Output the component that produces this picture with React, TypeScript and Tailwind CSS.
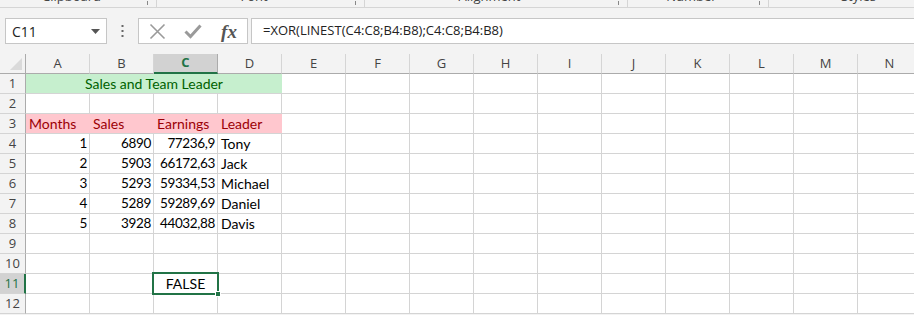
import React from 'react';

const COLS = ['A', 'B', 'C', 'D', 'E', 'F', 'G', 'H', 'I', 'J', 'K', 'L', 'M', 'N'];

type Cell = { text?: string; align?: 'left' | 'right' | 'center' };

// sheet contents, by row number -> column index
const data: Record<number, Record<number, Cell>> = {
  4: { 0: { text: '1', align: 'right' }, 1: { text: '6890', align: 'right' }, 2: { text: '77236,9', align: 'right' }, 3: { text: 'Tony' } },
  5: { 0: { text: '2', align: 'right' }, 1: { text: '5903', align: 'right' }, 2: { text: '66172,63', align: 'right' }, 3: { text: 'Jack' } },
  6: { 0: { text: '3', align: 'right' }, 1: { text: '5293', align: 'right' }, 2: { text: '59334,53', align: 'right' }, 3: { text: 'Michael' } },
  7: { 0: { text: '4', align: 'right' }, 1: { text: '5289', align: 'right' }, 2: { text: '59289,69', align: 'right' }, 3: { text: 'Daniel' } },
  8: { 0: { text: '5', align: 'right' }, 1: { text: '3928', align: 'right' }, 2: { text: '44032,88', align: 'right' }, 3: { text: 'Davis' } },
};

const headers3 = ['Months', 'Sales', 'Earnings', 'Leader'];

const ribbonGroups = [
  { label: 'Clipboard', w: 'w-[157px]', launcher: true },
  { label: 'Font', w: 'w-[208px]', launcher: true },
  { label: 'Alignment', w: 'w-[263px]', launcher: true },
  { label: 'Number', w: 'w-[141px]', launcher: true },
  { label: 'Styles', w: 'w-[180px]', launcher: false },
];

const RowHeader = ({ n, active }: { n: number; active?: boolean }) => (
  <div
    className={`w-[26px] shrink-0 h-full flex items-center justify-center text-[13px] border-b border-[#d4d4d4] ${
      active
        ? 'bg-[#d2d2d2] text-[#217346] border-r-2 border-r-[#217346]'
        : 'bg-[#f3f3f3] text-[#444] border-r border-r-[#ababab]'
    }`}
    style={{ fontFamily: '"Open Sans", sans-serif' }}
  >
    {n}
  </div>
);

const GridCell = ({ cell }: { cell?: Cell }) => (
  <div
    className={`w-[64px] shrink-0 h-full border-r border-b border-[#d4d4d4] px-[3px] flex items-center whitespace-nowrap overflow-hidden ${
      cell?.align === 'right' ? 'justify-end pr-[2px] text-[13.5px] tracking-[-0.35px]' : 'justify-start'
    }`}
  >
    {cell?.text}
  </div>
);

export default function App() {
  const rows = Array.from({ length: 12 }, (_, i) => i + 1);

  return (
    <div
      className="w-[914px] h-[315px] overflow-hidden bg-[#f3f3f3] text-black"
      style={{ fontFamily: 'Lato, "Liberation Sans", sans-serif' }}
    >
      {/* Ribbon group labels, cut off at the top */}
      <div className="h-[8px] flex border-b border-[#d5d5d5] overflow-hidden text-[13px] text-[#444]">
        {ribbonGroups.map((g) => (
          <div key={g.label} className={`${g.w} shrink-0 flex border-r border-[#d5d5d5] relative`}>
            <span className="flex-1 text-center -mt-[13px] leading-[18px]" style={{ fontFamily: '"Open Sans", sans-serif' }}>
              {g.label}
            </span>
            {g.launcher && <span className="w-[5px] h-[4px] border-r border-[#888] mr-[8px] mt-[1px]" />}
          </div>
        ))}
      </div>

      {/* Formula bar */}
      <div className="flex items-center h-[26px] mt-[10px] pl-[5px]">
        <div className="w-[102px] h-full bg-white border border-[#c6c6c6] flex items-center pl-[6px] pr-[6px]">
          <span className="flex-1 text-[14px] text-[#222]" style={{ fontFamily: '"Open Sans", sans-serif' }}>C11</span>
          <svg width="9" height="5" viewBox="0 0 9 5"><path d="M0 0h9L4.5 5z" fill="#555" /></svg>
        </div>
        <div className="w-[31px] flex justify-center">
          <svg width="3" height="12" viewBox="0 0 3 12" fill="#666">
            <rect x="0.5" y="0" width="2" height="2" />
            <rect x="0.5" y="5" width="2" height="2" />
            <rect x="0.5" y="10" width="2" height="2" />
          </svg>
        </div>
        <div className="w-[110px] h-full bg-white border border-[#c6c6c6] flex items-center">
          <div className="w-[36px] flex justify-center">
            <svg width="17" height="17" viewBox="0 0 17 17" stroke="#9a9a9a" strokeWidth="1.6">
              <path d="M1.5 1.5l14 14M15.5 1.5l-14 14" />
            </svg>
          </div>
          <div className="w-[36px] flex justify-center">
            <svg width="18" height="15" viewBox="0 0 18 15" fill="none" stroke="#9a9a9a" strokeWidth="3">
              <path d="M1.5 7.5l5 5 10-11" />
            </svg>
          </div>
          <div className="w-[36px] flex justify-center">
            <span
              className="italic font-bold text-[19px] text-[#555] leading-none"
              style={{ fontFamily: '"Liberation Serif", serif' }}
            >
              fx
            </span>
          </div>
        </div>
        <div className="ml-[3px] flex-1 h-full bg-white border border-r-0 border-[#c6c6c6] flex items-center pl-[11px]">
          <span className="text-[13px] text-[#222]" style={{ fontFamily: '"Open Sans", sans-serif' }}>
            =XOR(LINEST(C4:C8;B4:B8);C4:C8;B4:B8)
          </span>
        </div>
      </div>

      {/* Column headers */}
      <div className="flex h-[20px] mt-[10px]">
        <div className="w-[26px] shrink-0 h-full bg-[#f3f3f3] border-r border-b border-[#ababab] flex items-end justify-end pr-[3px] pb-[3px]">
          <svg width="12" height="12" viewBox="0 0 12 12"><path d="M12 0V12H0z" fill="#dadada" /></svg>
        </div>
        {COLS.map((c) => (
          <div
            key={c}
            className={`w-[64px] shrink-0 h-full flex items-center justify-center text-[13px] ${
              c === 'C'
                ? 'bg-[#d2d2d2] text-[#217346] font-bold border-b-2 border-[#217346] border-r border-r-[#ababab]'
                : 'bg-[#f3f3f3] text-[#444] border-b border-[#ababab] border-r border-r-[#d5d5d5]'
            }`}
            style={{ fontFamily: '"Open Sans", sans-serif' }}
          >
            {c}
          </div>
        ))}
      </div>

      {/* Sheet rows */}
      <div className="bg-white text-[14px]">
        {rows.map((r) => (
          <div key={r} className="flex h-[20px]">
            <RowHeader n={r} active={r === 11} />
            {r === 1 ? (
              <>
                <div className="w-[256px] shrink-0 h-full bg-[#c6efce] text-[#006100] border-b border-[#d4d4d4] flex items-center justify-center">
                  Sales and Team Leader
                </div>
                {COLS.slice(4).map((c) => <GridCell key={c} />)}
              </>
            ) : r === 3 ? (
              <>
                {headers3.map((h) => (
                  <div key={h} className="w-[64px] shrink-0 h-full bg-[#ffc7ce] text-[#9c0006] border-b border-[#d4d4d4] px-[3px] flex items-center">
                    {h}
                  </div>
                ))}
                {COLS.slice(4).map((c) => <GridCell key={c} />)}
              </>
            ) : (
              COLS.map((c, i) =>
                r === 11 && i === 2 ? (
                  <div key={c} className="w-[64px] shrink-0 h-full border-r border-b border-[#d4d4d4] relative flex items-center justify-center">
                    FALSE
                    <div className="absolute -left-[2px] -top-[2px] -right-[2px] -bottom-[2px] border-2 border-[#217346]" />
                    <div className="absolute -right-[4px] -bottom-[4px] w-[6px] h-[6px] bg-[#217346] border border-white" />
                  </div>
                ) : (
                  <GridCell key={c} cell={data[r]?.[i]} />
                )
              )
            )}
          </div>
        ))}
      </div>
    </div>
  );
}
